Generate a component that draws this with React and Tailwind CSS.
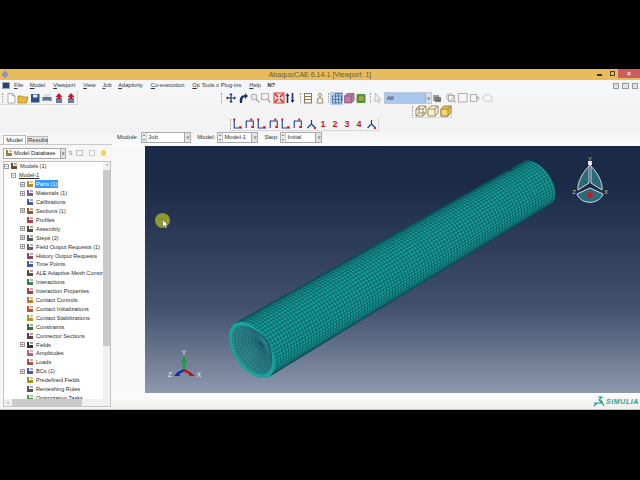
// tube geometry in viewport-local coords (viewport origin is 145,146)
const near = { x: 107, y: 204, s: 1 };
const far = { x: 392, y: 37, s: 0.8 };
const U = { x: 17, y: 26.5 };
const V = { x: 15.5, y: -9 };

function tubePoint(t, a) {
  const s = near.s + (far.s - near.s) * t;
  const cx = near.x + (far.x - near.x) * t;
  const cy = near.y + (far.y - near.y) * t;
  return [cx + s * (U.x * Math.cos(a) + V.x * Math.sin(a)), cy + s * (U.y * Math.cos(a) + V.y * Math.sin(a))];
}

function pts(list) {
  return list.map((p) => p[0].toFixed(1) + "," + p[1].toFixed(1)).join(" ");
}

function arcAt(t, from, to, n = 28) {
  const out = [];
  for (let i = 0; i <= n; i++) out.push(tubePoint(t, from + ((to - from) * i) / n));
  return out;
}

function Tube() {
  const rings = [];
  for (let i = 0; i <= 100; i++) rings.push(i / 100);
  const longs = [];
  for (let i = 0; i <= 24; i++) longs.push((i / 24) * Math.PI);
  const body = [...arcAt(0, Math.PI, 2 * Math.PI), ...arcAt(1, 0, Math.PI)];
  const innerRings = [1, 2, 3, 4, 5, 6, 7];
  const spokes = [];
  for (let i = 0; i < 52; i++) spokes.push((i / 52) * Math.PI * 2);
  const ellipse = arcAt(0, 0, 2 * Math.PI, 48);
  const scaled = (k, dx = 0, dy = 0) => ellipse.map((p) => [near.x + (p[0] - near.x) * k + dx, near.y + (p[1] - near.y) * k + dy]);
  return (
    <svg className="absolute inset-0" width="495" height="247" viewBox="0 0 495 247">
      <polygon points={pts(body)} fill="#149c94" />
      {rings.map((t) => (
        <polyline key={t} points={pts(arcAt(t, 0, Math.PI, 16))} fill="none" stroke="#0c4450" strokeWidth="0.6" />
      ))}
      {longs.map((a) => (
        <polyline key={a} points={pts([tubePoint(0, a), tubePoint(1, a)])} fill="none" stroke="#0c4450" strokeWidth="0.6" />
      ))}
      <polygon points={pts(ellipse)} fill="#16a79c" />
      <polygon points={pts(scaled(0.88))} fill="#2f8a8e" />
      {innerRings.map((i) => (
        <polygon key={i} points={pts(scaled(0.88 - i * 0.08, i * 1.5, -i * 0.9))} fill="none" stroke="#1c5966" strokeWidth="0.5" />
      ))}
      {spokes.map((a) => {
        const p = tubePoint(0, a);
        return <line key={a} x1={near.x + (p[0] - near.x) * 0.88} y1={near.y + (p[1] - near.y) * 0.88} x2={near.x + 10} y2={near.y - 6} stroke="#1c5966" strokeWidth="0.45" />;
      })}
      <rect x="363" y="22" width="4" height="3" fill="#12303f" transform="rotate(-30 365 23)" />
    </svg>
  );
}

function TopTriad() {
  return (
    <svg className="absolute left-[425px] top-[8px]" width="40" height="55" viewBox="0 0 40 55">
      <path d="M20 11 C13 18 7 28 8 36 L19 29 L19 12Z" fill="#2a6b78" stroke="#d5dbea" strokeWidth="1" />
      <path d="M20 11 C27 18 33 28 32 36 L21 29 L21 12Z" fill="#2a6b78" stroke="#d5dbea" strokeWidth="1" />
      <path d="M7 40 L20 34 L33 40 C29 51 11 51 7 40Z" fill="#2a6b78" stroke="#d5dbea" strokeWidth="1" />
      <rect x="18" y="7" width="4" height="4" fill="#e4e2f2" />
      <rect x="17.5" y="38.5" width="5" height="5" fill="#e0101a" />
      <text x="20" y="7" textAnchor="middle" fontSize="6" fill="#c9c94a" fontFamily="Liberation Sans">Y</text>
      <text x="4" y="40" textAnchor="middle" fontSize="6" fill="#c9c94a" fontFamily="Liberation Sans">Z</text>
      <text x="36" y="40" textAnchor="middle" fontSize="6" fill="#c9c94a" fontFamily="Liberation Sans">X</text>
    </svg>
  );
}

function BottomTriad() {
  return (
    <svg className="absolute left-[20px] top-[204px]" width="40" height="36" viewBox="0 0 40 36">
      <line x1="19" y1="20" x2="19" y2="11" stroke="#12a33a" strokeWidth="2.4" />
      <path d="M16 12 L19 6 L22 12Z" fill="#12a33a" />
      <line x1="19" y1="20" x2="12" y2="24" stroke="#1626b8" strokeWidth="2.4" />
      <path d="M13 22 L9 26 L15 26Z" fill="#1626b8" />
      <line x1="19" y1="20" x2="26" y2="24" stroke="#b3141e" strokeWidth="2.4" />
      <path d="M25 22 L30 26 L24 26Z" fill="#b3141e" />
      <text x="19" y="5" textAnchor="middle" fontSize="6.5" fill="#eef0f6" fontFamily="Liberation Sans">Y</text>
      <text x="5" y="27" textAnchor="middle" fontSize="6.5" fill="#eef0f6" fontFamily="Liberation Sans">Z</text>
      <text x="34" y="27" textAnchor="middle" fontSize="6.5" fill="#eef0f6" fontFamily="Liberation Sans">X</text>
    </svg>
  );
}

function Cursor() {
  return (
    <div className="absolute left-[10px] top-[67px] w-[15px] h-[15px] rounded-full bg-[#8e9a2c]">
      <svg className="absolute left-[7px] top-[6px]" width="7" height="10" viewBox="0 0 7 10">
        <path d="M0.5 0.5 L0.5 8 L2.4 6.4 L3.8 9.3 L5 8.7 L3.7 6 L6.2 6Z" fill="#fff" stroke="#222" strokeWidth="0.4" />
      </svg>
    </div>
  );
}

// small 12px toolbar glyphs
const toolGlyphs = {
  page: <path d="M3 1.5h4.5L10 4v7H3Z M7.5 1.5V4H10" fill="#fff" stroke="#9a9a9a" strokeWidth="0.8" />,
  open: <path d="M1 4h4l1 1h5l-1.5 6H1Z" fill="#e8b93f" stroke="#a57d20" strokeWidth="0.7" />,
  save: <g><rect x="2" y="2" width="8.5" height="8.5" fill="#2e4f86" /><rect x="4" y="2.5" width="4.5" height="3" fill="#dfe6f2" /></g>,
  print: <g><rect x="3" y="2" width="6" height="3" fill="#dfe0e4" /><rect x="1.5" y="5" width="9" height="4" fill="#5c6f9a" /><rect x="3" y="8.5" width="6" height="2" fill="#eee" /></g>,
  up: <g><rect x="3" y="6" width="6" height="5" fill="#6d7ba4" /><path d="M6 1 L9.5 5 H7.5 V7 H4.5 V5 H2.5Z" fill="#c5182a" /></g>,
  move: <path d="M6 1 L7.8 3 H6.6 V5.4 H9 V4.2 L11 6 L9 7.8 V6.6 H6.6 V9 H7.8 L6 11 L4.2 9 H5.4 V6.6 H3 V7.8 L1 6 L3 4.2 V5.4 H5.4 V3 H4.2Z" fill="#17326f" />,
  rot: <path d="M3 11 C2 6 4 3 8 3 L8 1 L11 4 L8 7 L8 5 C6 5 5 7 5 11Z" fill="#17326f" />,
  mag: <g><circle cx="5" cy="5" r="3" fill="#e8e8e8" stroke="#aaa" /><path d="M7 7 L10.5 10.5" stroke="#aaa" strokeWidth="1.4" /></g>,
  boxz: <g><rect x="1.5" y="1.5" width="7" height="6" fill="none" stroke="#d69a9a" /><path d="M7 7 L10.5 10.5" stroke="#aaa" strokeWidth="1.4" /></g>,
  fit: <g><rect x="1" y="1" width="10" height="10" fill="#f4d9d4" stroke="#d23a2a" /><path d="M2 2 L5 5 M10 2 L7 5 M2 10 L5 7 M10 10 L7 7" stroke="#c5182a" strokeWidth="1.4" /></g>,
  arrows: <path d="M3.5 1 L5.5 4 H4.3 V11 H2.7 V4 H1.5Z M8.5 11 L6.5 8 H7.7 V1 H9.3 V8 H10.5Z" fill="#17326f" />,
  list: <g fill="none" stroke="#8a7a4a"><rect x="2.5" y="1.5" width="7" height="9.5" /><path d="M2.5 4.5H9.5M2.5 7.5H9.5" /></g>,
  person: <g fill="none" stroke="#9a8d6a"><circle cx="6" cy="3" r="1.6" /><path d="M3 11 L4 6 H8 L9 11Z" /></g>,
  mesh: <g fill="none" stroke="#3b5d96" strokeWidth="0.7"><path d="M1.5 4 H10.5 V11 H1.5Z M4.5 1.5 V11 M7.5 1.5V11 M1.5 7.5 H10.5 M4 1.5 H11 V9" /></g>,
  part: <g><path d="M1.5 4 L4 1.5 H11 V8.5 L8.5 11 H1.5Z" fill="#b87ca8" stroke="#a0404e" strokeWidth="0.7" /><path d="M1.5 4H8.5V11M8.5 4L11 1.5" fill="none" stroke="#5a5aa0" strokeWidth="0.6" /></g>,
  green: <g><rect x="1.5" y="2" width="9" height="9" rx="1" fill="#4c9a3c" /><rect x="4" y="4.5" width="4.5" height="4" fill="#c99a3c" /></g>,
  arrow: <path d="M3 1 V10 L5 8 L6.5 11 L8 10 L6.5 7.5 H9Z" fill="#eee" stroke="#aaa" strokeWidth="0.7" />,
  grey: <g><rect x="2" y="3" width="6" height="6" fill="#999" /><rect x="4" y="5" width="6" height="5" fill="#777" /></g>,
  gmag: <g fill="none" stroke="#b0b0b0"><circle cx="5" cy="5" r="3.4" /><rect x="3.5" y="3.5" width="6" height="6" /><path d="M8 8L11 11" /></g>,
  gbox: <g fill="none" stroke="#b9a9a9"><rect x="1.5" y="1.5" width="8.5" height="8.5" /></g>,
  gbox2: <g fill="none" stroke="#b0b0b0"><rect x="1.5" y="2.5" width="6" height="7" /><path d="M7 6h4M9 4v5" /></g>,
  goval: <g fill="none" stroke="#b0b0b0" strokeDasharray="1.5 1"><ellipse cx="5.5" cy="6" rx="4.5" ry="3.5" /><path d="M8 8L11 11" /></g>,
  cubeWire: <g stroke="#8a7432" strokeWidth="0.8" fill="none"><path d="M1 4 L4 1 H11 V8 L8 11 H1Z" /><path d="M1 4H8V11M8 4L11 1M4 1V8H11M1 11L4 8" /></g>,
  cubeHid: <g stroke="#8a7432" strokeWidth="0.8" fill="#f7f1de"><path d="M1 4 L4 1 H11 V8 L8 11 H1Z" /><path d="M1 4H8V11M8 4L11 1" fill="none" /></g>,
  cubeSolid: <g stroke="#8a7432" strokeWidth="0.8"><path d="M1 4 L4 1 H11 V8 L8 11 H1Z" fill="#e9c44a" /><path d="M1 4H8V11H1Z" fill="#f4d768" /><path d="M8 4L11 1" fill="none" /></g>,
};

function Tool({ name, className = "" }) {
  return (
    <svg className={"shrink-0 " + className} width="12" height="12" viewBox="0 0 12 12">
      {toolGlyphs[name]}
    </svg>
  );
}

function Grip() {
  return <div className="w-[1px] h-[10px] border-l border-dotted border-[#999] shrink-0" />;
}

function AxisIcon({ flip }) {
  return (
    <svg width="11.5" height="12" viewBox="0 0 11 12" className="shrink-0">
      <path d={flip ? "M9 10 V3 H2 V10" : "M2 2 V10 H10"} fill="none" stroke="#1d3f8f" strokeWidth="1.1" />
      <rect x={flip ? 6 : 1} y="0.5" width="2" height="2" fill="#d11a22" />
      <rect x="7" y="8" width="2" height="2" fill="#d11a22" />
    </svg>
  );
}

function TriadIcon() {
  return (
    <svg width="11" height="12" viewBox="0 0 11 12">
      <path d="M5.5 2 V6 L1.5 10 M5.5 6 L9.5 10" fill="none" stroke="#1d3f8f" strokeWidth="1.2" />
      <rect x="8" y="9" width="2" height="2" fill="#d11a22" />
    </svg>
  );
}

const menuItems = [
  ["F", "ile", "ml-[4px]"],
  ["M", "odel", "ml-[6.5px]"],
  ["V", "iewport", "ml-[8px]"],
  ["V", "iew", "ml-[8px]"],
  ["J", "ob", "ml-[7px]"],
  ["A", "daptivity", "ml-[6.5px]"],
  ["C", "o-execution", "ml-[8px]"],
  ["O", "p Tools c Plug-ins", "ml-[8px]"],
  ["H", "elp", "ml-[8px]"],
];

function MenuBar() {
  return (
    <div className="h-[11px] bg-[#f5f6fa] flex items-center pl-[2px] relative">
      <div className="w-[8px] h-[7px] bg-[#2a3f7a] border border-[#9ab]" />
      {menuItems.map(([first, rest, cls]) => (
        <span key={first + rest} className={"text-[#333] text-[5.7px] leading-none " + cls}>
          <span className="underline">{first}</span>
          {rest}
        </span>
      ))}
      <span className="ml-[6.5px] text-[#222] text-[5.7px] font-bold leading-none">N?</span>
      <div className="ml-auto flex gap-[3px] pr-[2px]">
        <div className="w-[6.5px] h-[6px] border border-[#999] bg-[#dde3ee]" />
        <div className="w-[6.5px] h-[6px] border border-[#999] bg-[#dde3ee]" />
        <div className="w-[6.5px] h-[6px] border border-[#999] bg-[#dde3ee]" />
      </div>
    </div>
  );
}

function Toolbars() {
  return (
    <div className="h-[41px] bg-gradient-to-b from-[#f6f6f6] to-[#f2f2f2] flex flex-col">
      <div className="h-[14px] flex items-center">
        <div className="w-[78px] h-[14px] flex items-center border-b border-r border-[#d8d8d8] pl-[2px]">
          <Grip />
          <Tool name="page" className="ml-[2px]" />
          <Tool name="open" />
          <Tool name="save" />
          <Tool name="print" />
          <Tool name="up" />
          <Tool name="up" />
        </div>
        <div className="ml-[143px] flex items-center h-[14px]">
          <Grip />
          <Tool name="move" className="ml-[3px]" />
          <Tool name="rot" />
          <Tool name="mag" />
          <Tool name="boxz" className="-ml-[1px]" />
          <Tool name="fit" className="ml-[1px]" />
          <Tool name="arrows" className="-ml-[1px]" />
          <div className="ml-[4px]"><Grip /></div>
          <Tool name="list" className="ml-[1px]" />
          <Tool name="person" />
          <div className="ml-[2px]"><Grip /></div>
          <div className="w-[13px] h-[13px] bg-[#b6cdea] ml-[1px] flex items-center justify-center"><Tool name="mesh" /></div>
          <Tool name="part" />
          <Tool name="green" />
          <div className="ml-[3px]"><Grip /></div>
          <Tool name="arrow" className="ml-[1px]" />
          <div className="w-[48px] h-[12px] bg-[#a9c6ec] border border-[#bcc9dc] flex items-center pl-[2px] text-[6px] text-[#223] relative">
            All
            <div className="absolute right-0 top-0 bottom-0 w-[6px] bg-[#d8dde6] border-l border-[#aab] text-[5px] leading-[10px] text-center">v</div>
          </div>
          <Tool name="grey" className="-ml-[1px]" />
          <Tool name="gmag" className="ml-[2px]" />
          <Tool name="gbox" />
          <Tool name="gbox2" />
          <Tool name="goval" className="ml-[1px]" />
        </div>
      </div>
      <div className="h-[13px] flex items-center">
        <div className="ml-[411px] flex items-center gap-[0.5px] h-[13px] w-[41px] pl-[1px] bg-[#f4f4f4] border-b border-r border-[#d8d8d8]">
          <Grip />
          <Tool name="cubeWire" className="ml-[1px]" />
          <Tool name="cubeHid" />
          <Tool name="cubeSolid" />
        </div>
      </div>
      <div className="h-[14px] flex items-start">
        <div className="ml-[229px] w-[150px] h-[13px] flex items-center pl-[1px] border-b border-r border-[#d8d8d8] bg-[#f4f4f4]">
          <Grip />
          <div className="flex ml-[1px] gap-[0.5px]">
            <AxisIcon />
            <AxisIcon flip />
            <AxisIcon />
            <AxisIcon flip />
            <AxisIcon />
            <AxisIcon flip />
          </div>
          <div className="ml-[2px]">
            <TriadIcon />
          </div>
          <div className="flex ml-[4px] text-[#d0141c] text-[9px] font-bold leading-none gap-[7px]">
            <span>1</span>
            <span>2</span>
            <span>3</span>
            <span>4</span>
          </div>
          <div className="ml-[4px]">
            <TriadIcon />
          </div>
        </div>
      </div>
    </div>
  );
}

function Combo({ value, width }) {
  return (
    <div className={"h-[11px] border border-[#aaa] bg-white flex items-center text-[6px] text-[#333] " + width}>
      <div className="w-[5px] h-full bg-[#eee] border-r border-[#ccc] text-[4px] leading-[4.5px] text-center text-[#666]">
        ▴<br />▾
      </div>
      <span className="pl-[1px]">{value}</span>
      <div className="ml-auto w-[6px] h-full bg-[#dfe3ea] border-l border-[#aaa] text-[5px] leading-[9px] text-center text-[#444]">v</div>
    </div>
  );
}

const treeRows = [
  { label: "Models (1)", lvl: 0, plus: "−", icon: "#6b4a2c" },
  { label: "Model-1", lvl: 1, plus: "−", under: true },
  { label: "Parts (1)", lvl: 2, plus: "+", icon: "#b5902e", sel: true },
  { label: "Materials (1)", lvl: 2, plus: "+", icon: "#7b5a8c" },
  { label: "Calibrations", lvl: 2, icon: "#4a5a9c" },
  { label: "Sections (1)", lvl: 2, plus: "+", icon: "#a0572c" },
  { label: "Profiles", lvl: 2, icon: "#b3424a" },
  { label: "Assembly", lvl: 2, plus: "+", icon: "#5c4a3a" },
  { label: "Steps (2)", lvl: 2, plus: "+", icon: "#555" },
  { label: "Field Output Requests (1)", lvl: 2, plus: "+", icon: "#6b5a72" },
  { label: "History Output Requests", lvl: 2, icon: "#8a4a62" },
  { label: "Time Points", lvl: 2, icon: "#4a5a9c" },
  { label: "ALE Adaptive Mesh Constr", lvl: 2, icon: "#5a4a3a" },
  { label: "Interactions", lvl: 2, icon: "#3f7d55" },
  { label: "Interaction Properties", lvl: 2, icon: "#a0404a" },
  { label: "Contact Controls", lvl: 2, icon: "#b3802c" },
  { label: "Contact Initializations", lvl: 2, icon: "#c8522c" },
  { label: "Contact Stabilizations", lvl: 2, icon: "#a89a2c" },
  { label: "Constraints", lvl: 2, icon: "#3a6a3a" },
  { label: "Connector Sections", lvl: 2, icon: "#5a3f4a" },
  { label: "Fields", lvl: 2, plus: "+", icon: "#333" },
  { label: "Amplitudes", lvl: 2, icon: "#b0607a" },
  { label: "Loads", lvl: 2, icon: "#a8504a" },
  { label: "BCs (1)", lvl: 2, plus: "+", icon: "#4a5a9c" },
  { label: "Predefined Fields", lvl: 2, icon: "#a8902c" },
  { label: "Remeshing Rules", lvl: 2, icon: "#555" },
  { label: "Optimization Tasks", lvl: 2, icon: "#4d9a4a" },
];

function TreeIcon({ color }) {
  return (
    <svg width="8" height="8" viewBox="0 0 8 8" className="shrink-0">
      <path d="M1 7 V1 H3 V4 H7 V7Z" fill={color} />
      <path d="M4 1 H7 V3 H4Z" fill={color} opacity="0.5" />
    </svg>
  );
}

function PlusBox({ mark }) {
  return (
    <div className="w-[5px] h-[5px] border border-[#999] bg-white text-[5px] leading-[3px] text-center text-[#444] shrink-0 overflow-hidden">
      {mark}
    </div>
  );
}

function TreeRow({ row }) {
  const indent = row.lvl === 0 ? "pl-[0px]" : row.lvl === 1 ? "pl-[7px]" : "pl-[16px]";
  return (
    <div className={"h-[8.92px] flex items-center whitespace-nowrap " + indent}>
      <div className="w-[6px] shrink-0">{row.plus && <PlusBox mark={row.plus} />}</div>
      {row.icon && <TreeIcon color={row.icon} />}
      <span
        className={
          "text-[5.6px] leading-[8px] ml-[1px] px-[1px] " +
          (row.sel ? "bg-[#3399ff] text-white" : "text-[#2b2b2b]") +
          (row.under ? " underline" : "")
        }
      >
        {row.label}
      </span>
    </div>
  );
}

function LeftPanel() {
  return (
    <div className="w-[112px] shrink-0 bg-[#f6f6f6] flex flex-col">
      <div className="h-[13px] flex items-end pl-[3px] border-b border-[#c9c9c9]">
        <div className="w-[23px] h-[9.5px] bg-white border border-b-0 border-[#bbb] text-[6px] leading-[8.5px] text-center text-[#222]">Model</div>
        <div className="ml-[1px] w-[21px] h-[8.5px] bg-[#e6e6e6] border border-b-0 border-[#bbb] text-[6px] leading-[7.5px] text-center text-[#333]">Results</div>
      </div>
      <div className="h-[16px] flex items-center pl-[3px]">
        <div className="w-[63px] h-[11px] bg-white border border-[#aaa] flex items-center pl-[1px] text-[5.7px] text-[#222]">
          <TreeIcon color="#a8802c" />
          <span className="ml-[1px]">Model Database</span>
          <div className="ml-auto w-[5px] h-full bg-[#dfe3ea] border-l border-[#aaa] text-[5px] leading-[9px] text-center">v</div>
        </div>
        <div className="ml-[2px] text-[6px] text-[#999] leading-none">⇅</div>
        <div className="w-[7px] h-[6px] border border-[#bbb] ml-[3px]" />
        <div className="w-[6px] h-[6px] border border-[#ccc] ml-[6px]" />
        <div className="w-[5px] h-[6px] rounded-full bg-[#e6d84a] ml-[6px]" />
      </div>
      <div className="ml-[3px] h-[246px] w-[108px] bg-white border border-[#c4c4c4] flex relative overflow-hidden">
        <div className="w-[99px] overflow-hidden">
          {treeRows.map((row) => (
            <TreeRow key={row.label} row={row} />
          ))}
        </div>
        <div className="w-[7px] bg-[#f0f0f0] flex flex-col">
          <div className="h-[8px] text-[5px] leading-[8px] text-center text-[#555]">⌃</div>
          <div className="h-[176px] bg-[#c9c9c9]" />
        </div>
        <div className="absolute left-0 right-0 bottom-0 h-[7px] bg-[#f0f0f0] flex items-center">
          <div className="w-[8px] text-[5px] text-center text-[#555] leading-none">‹</div>
          <div className="w-[70px] h-full bg-[#cbcbcb]" />
        </div>
      </div>
    </div>
  );
}

function SimuliaLogo() {
  return (
    <div className="flex items-center">
      <svg width="12" height="11" viewBox="0 0 12 11">
        <path d="M5 1 H9 L6 4 L9 7 H1 M8 4 L11 10 M4 7 L1 10" fill="none" stroke="#159a8c" strokeWidth="1.1" />
      </svg>
      <span className="ml-[1px] text-[7px] font-bold italic tracking-[0.6px] text-[#1f9e8e] leading-none">SIMULIA</span>
    </div>
  );
}

export default function App() {
  return (
    <div className="w-[640px] h-[480px] bg-black overflow-hidden flex flex-col pt-[69px] font-['Liberation_Sans',sans-serif]">
      <div className="h-[341px] bg-[#f6f6f6] flex flex-col">
        <div className="h-[11px] bg-[#e8bb5d] flex items-center relative shrink-0">
          <svg className="absolute left-[1px] top-[1px]" width="8" height="9" viewBox="0 0 8 9">
            <path d="M4 0.5 L7.5 4.5 H0.5Z M4 8.5 L7.5 4.5 H0.5Z" fill="#8e93c4" />
          </svg>
          <div className="w-full text-center text-[7px] leading-none text-[#6b5a32]">Abaqus/CAE 6.14-1 [Viewport: 1]</div>
          <div className="absolute right-[0px] top-0 h-[9px] flex items-center">
            <div className="w-[5px] h-[1.5px] bg-[#333] mr-[8px] mt-[3px]" />
            <div className="w-[5px] h-[5px] border border-[#444] mr-[3.5px]" />
            <div className="w-[22px] h-[9px] bg-[#cd5a5e] text-white text-[7px] leading-[9px] text-center font-bold">×</div>
          </div>
        </div>
        <MenuBar />
        <Toolbars />
        <div className="flex-1 flex min-h-0">
          <LeftPanel />
          <div className="flex-1 flex flex-col min-w-0">
            <div className="h-[14px] flex items-start bg-gradient-to-b from-[#f4f4f4] to-[#fdfdfd] pl-[5px] text-[6px] text-[#333]">
              <span className="leading-[11px]">Module:</span>
              <div className="ml-[3px]"><Combo value="Job" width="w-[50px]" /></div>
              <span className="ml-[6px] leading-[11px]">Model:</span>
              <div className="ml-[2px]"><Combo value="Model-1" width="w-[41px]" /></div>
              <span className="ml-[6px] leading-[11px]">Step:</span>
              <div className="ml-[2px]"><Combo value="Initial" width="w-[42px]" /></div>
            </div>
            <div className="h-[247px] flex shrink-0">
              <div className="w-[33px] bg-[#f8f8f8] shrink-0" />
              <div className="w-[495px] h-[247px] relative overflow-hidden bg-gradient-to-b from-[#1b2b47] from-[15%] via-[#41506c] via-[65%] to-[#8e99ae]">
                <Tube />
                <TopTriad />
                <BottomTriad />
                <Cursor />
              </div>
            </div>
            <div className="flex-1 bg-gradient-to-b from-[#fdfdfd] to-[#eef0ec] flex items-center justify-end pr-[1px]">
              <SimuliaLogo />
            </div>
          </div>
        </div>
        <div className="h-[1px] bg-[#c8c8a0]" />
      </div>
    </div>
  );
}
